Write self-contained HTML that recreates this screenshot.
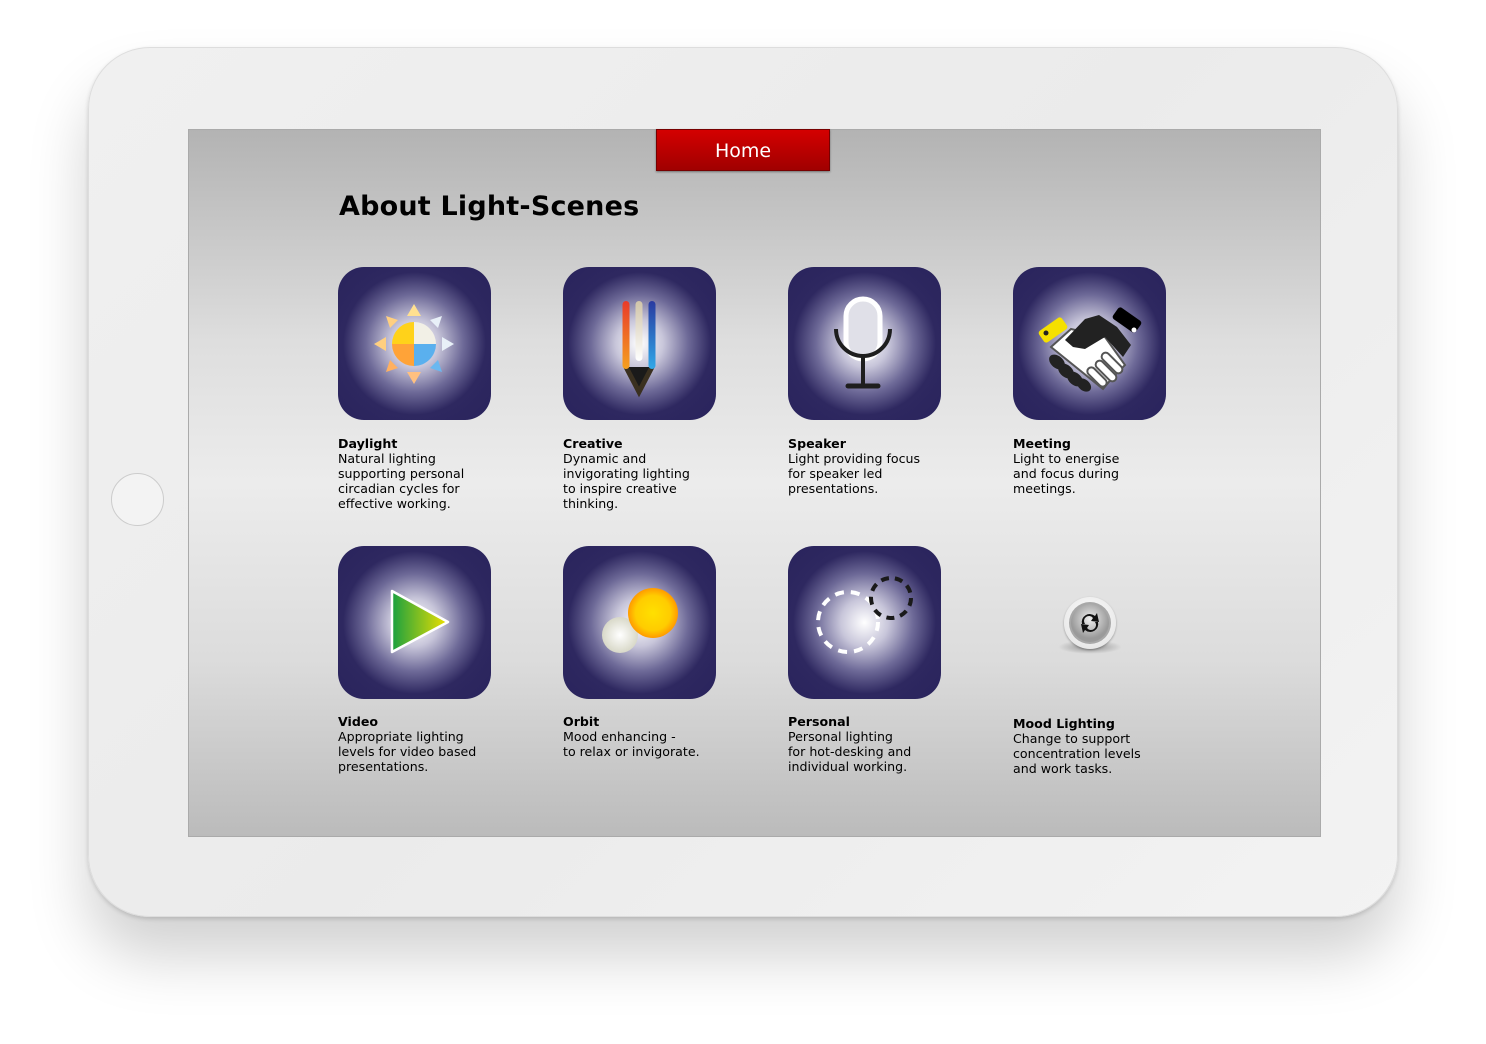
<!DOCTYPE html>
<html><head><meta charset="utf-8"><style>
*{margin:0;padding:0;box-sizing:border-box}
body{width:1486px;height:1044px;background:#fff;position:relative;overflow:hidden;font-family:"DejaVu Sans","Liberation Sans",sans-serif}
.tab{position:absolute;left:88px;top:47px;width:1310px;height:870px;border-radius:62px;background:linear-gradient(135deg,#f0f0f0,#ebebeb 50%,#f3f3f3);box-shadow:0 40px 60px rgba(0,0,0,.18),0 2px 4px rgba(0,0,0,.15);border:1px solid #ddd}
.hb{position:absolute;left:111px;top:473px;width:53px;height:53px;border-radius:50%;border:1px solid #ccc;background:#f3f3f3}
.scr{position:absolute;left:188px;top:129px;width:1133px;height:708px;background:linear-gradient(#b3b3b3,#dedede 30%,#ececec 50%,#dcdcdc 75%,#bbbbbb);border:1px solid #aaa}
.home{position:absolute;left:656px;top:129px;width:174px;height:42px;background:linear-gradient(#d40000,#a00000);color:#fff;font-size:19px;text-align:center;line-height:42px;border:1px solid #700;box-shadow:0 1px 2px rgba(0,0,0,.4)}
h1{position:absolute;left:339px;top:191px;font-size:27px;font-weight:bold;color:#000;letter-spacing:0.2px}
.ic{position:absolute;width:153px;height:153px;border-radius:26px;background:radial-gradient(circle at 50% 50%,#fff 0%,#c8c6da 22%,#6e6a98 45%,#2e2860 66%,#29235c 100%)}
.ic svg{position:absolute;left:0;top:0}
.t{position:absolute;font-size:12.6px;line-height:15px;color:#000}
.t b{display:block}
</style></head><body>
<div class="tab"></div>
<div class="hb"></div>
<div class="scr"></div>
<div class="home">Home</div>
<h1>About Light-Scenes</h1>

<div class="ic" style="left:338px;top:267px"><svg width="153" height="153">
<g transform="translate(76,77)">
<path d="M0,-22 A22,22 0 0 0 -22,0 L0,0Z" fill="#ffd21a"/>
<path d="M0,-22 A22,22 0 0 1 22,0 L0,0Z" fill="#f2f0e6"/>
<path d="M-22,0 A22,22 0 0 0 0,22 L0,0Z" fill="#ffa338"/>
<path d="M22,0 A22,22 0 0 1 0,22 L0,0Z" fill="#5ab0ee"/>
<g fill="#ffcf80"><path d="M0,-40 L-7,-28 L7,-28Z" fill="#ffe090"/><path d="M-28,-28 L-16,-24 L-24,-16Z"/><path d="M-40,0 L-28,-7 L-28,7Z"/><path d="M-28,28 L-24,16 L-16,24Z" fill="#ffb060"/><path d="M0,40 L-7,28 L7,28Z" fill="#ffc080"/></g>
<g fill="#e8f0f8"><path d="M28,-28 L16,-24 L24,-16Z"/><path d="M40,0 L28,-7 L28,7Z"/></g>
<path d="M28,28 L24,16 L16,24Z" fill="#6ab8f0"/>
</g></svg></div>

<div class="ic" style="left:563px;top:267px"><svg width="153" height="153">
<defs><linearGradient id="r" x1="0" y1="0" x2="0" y2="1"><stop offset="0" stop-color="#e83a2a"/><stop offset="1" stop-color="#f5a020"/></linearGradient>
<linearGradient id="bl" x1="0" y1="0" x2="0" y2="1"><stop offset="0" stop-color="#2a3aa0"/><stop offset="1" stop-color="#30a8e8"/></linearGradient>
<linearGradient id="wh" x1="0" y1="0" x2="0" y2="1"><stop offset="0" stop-color="#d0c4a8"/><stop offset="1" stop-color="#fff"/></linearGradient></defs>
<path d="M63,100 L76,125 L89,100" fill="#1a1a1a" stroke="#3a3020" stroke-width="5" stroke-linejoin="miter"/>
<rect x="59.5" y="34" width="7" height="68" rx="3.5" fill="url(#r)"/>
<rect x="72.5" y="34" width="7" height="60" rx="3.5" fill="url(#wh)"/>
<rect x="85.5" y="34" width="7" height="68" rx="3.5" fill="url(#bl)"/>
</svg></div>

<div class="ic" style="left:788px;top:267px"><svg width="153" height="153">
<rect x="58" y="32" width="34" height="60" rx="17" fill="#e0e0e8" stroke="#fff" stroke-width="5"/>
<path d="M48,62 A27,27 0 0 0 102,62" fill="none" stroke="#1e1e1e" stroke-width="4"/>
<line x1="75" y1="89" x2="75" y2="119" stroke="#1e1e1e" stroke-width="4"/>
<line x1="60" y1="119" x2="90" y2="119" stroke="#1e1e1e" stroke-width="5" stroke-linecap="round"/>
</svg></div>

<div class="ic" style="left:1013px;top:267px"><svg width="153" height="153">
<rect x="26" y="56" width="28" height="14" rx="3" fill="#f5e000" transform="rotate(-35 40 63)"/>
<circle cx="33" cy="66" r="2.5" fill="#222"/>
<path d="M38,80 L58,62 L92,70 L112,98 L100,110 L90,122 Z" fill="#fff" stroke="#555" stroke-width="2"/>
<g stroke="#555" stroke-width="2" fill="#fff"><rect x="86" y="92" width="26" height="8" rx="4" transform="rotate(45 99 96)"/><rect x="80" y="100" width="26" height="8" rx="4" transform="rotate(45 93 104)"/><rect x="72" y="106" width="24" height="8" rx="4" transform="rotate(45 84 110)"/></g>
<path d="M52,73 L72,52 L86,48 L104,60 L118,78 L110,90 L92,70 L72,82 L60,80 Z" fill="#222"/>
<rect x="100" y="46" width="28" height="14" rx="3" fill="#000" transform="rotate(35 114 53)"/>
<circle cx="121" cy="63" r="2.5" fill="#fff"/>
<g fill="#222"><ellipse cx="44" cy="95" rx="9" ry="6" transform="rotate(40 44 95)"/><ellipse cx="53" cy="104" rx="9" ry="6" transform="rotate(40 53 104)"/><ellipse cx="62" cy="112" rx="9" ry="6" transform="rotate(40 62 112)"/><ellipse cx="71" cy="118" rx="8" ry="5.5" transform="rotate(40 71 118)"/></g>
</svg></div>

<div class="t" style="left:338px;top:436px"><b>Daylight</b>Natural lighting<br>supporting personal<br>circadian cycles for<br>effective working.</div>
<div class="t" style="left:563px;top:436px"><b>Creative</b>Dynamic and<br>invigorating lighting<br>to inspire creative<br>thinking.</div>
<div class="t" style="left:788px;top:436px"><b>Speaker</b>Light providing focus<br>for speaker led<br>presentations.</div>
<div class="t" style="left:1013px;top:436px"><b>Meeting</b>Light to energise<br>and focus during<br>meetings.</div>

<div class="ic" style="left:338px;top:546px"><svg width="153" height="153">
<defs><linearGradient id="pg" x1="0" y1="0" x2="1" y2="0"><stop offset="0" stop-color="#1aa040"/><stop offset="1" stop-color="#f0e000"/></linearGradient></defs>
<path d="M54,45 L110,76 L54,106 Z" fill="url(#pg)" stroke="#fff" stroke-width="2.5" stroke-linejoin="round"/>
</svg></div>

<div class="ic" style="left:563px;top:546px"><svg width="153" height="153">
<defs><radialGradient id="yg"><stop offset="0" stop-color="#ffe000"/><stop offset=".7" stop-color="#ffcc00"/><stop offset="1" stop-color="#ff9a00"/></radialGradient>
<radialGradient id="wg"><stop offset="0" stop-color="#fff"/><stop offset="1" stop-color="#d8d8c8"/></radialGradient></defs>
<circle cx="57" cy="89" r="18" fill="url(#wg)"/>
<circle cx="90" cy="67" r="25" fill="url(#yg)"/>
</svg></div>

<div class="ic" style="left:788px;top:546px"><svg width="153" height="153">
<circle cx="60" cy="76" r="30" fill="none" stroke="#fff" stroke-width="4" stroke-dasharray="9 7"/>
<circle cx="103" cy="52" r="20" fill="none" stroke="#1a1a1a" stroke-width="4" stroke-dasharray="8 6"/>
</svg></div>

<div style="position:absolute;left:1058px;top:640px;width:64px;height:14px;border-radius:50%;background:radial-gradient(rgba(0,0,0,.35),rgba(0,0,0,0) 70%)"></div>
<div style="position:absolute;left:1064px;top:597px;width:52px;height:52px;border-radius:50%;background:radial-gradient(circle at 50% 40%,#fff,#e0e0e0);box-shadow:0 1px 2px rgba(0,0,0,.3)"></div>
<svg style="position:absolute;left:1064px;top:597px" width="52" height="52">
<defs><radialGradient id="bg2" cx=".5" cy=".4"><stop offset="0" stop-color="#eee"/><stop offset="1" stop-color="#9a9a9a"/></radialGradient></defs>
<circle cx="26" cy="26" r="21" fill="#a8a8a8"/><circle cx="26" cy="26" r="19" fill="url(#bg2)"/>
<path d="M18,27 A8,8 0 0 1 31,19 L33,16 L35,25 L27,24 L29,21 A5,5 0 0 0 21,27Z" fill="#111"/>
<path d="M34,25 A8,8 0 0 1 21,33 L19,36 L17,27 L25,28 L23,31 A5,5 0 0 0 31,25Z" fill="#111"/>
</svg>

<div class="t" style="left:338px;top:714px"><b>Video</b>Appropriate lighting<br>levels for video based<br>presentations.</div>
<div class="t" style="left:563px;top:714px"><b>Orbit</b>Mood enhancing -<br>to relax or invigorate.</div>
<div class="t" style="left:788px;top:714px"><b>Personal</b>Personal lighting<br>for hot-desking and<br>individual working.</div>
<div class="t" style="left:1013px;top:716px"><b>Mood Lighting</b>Change to support<br>concentration levels<br>and work tasks.</div>
</body></html>
